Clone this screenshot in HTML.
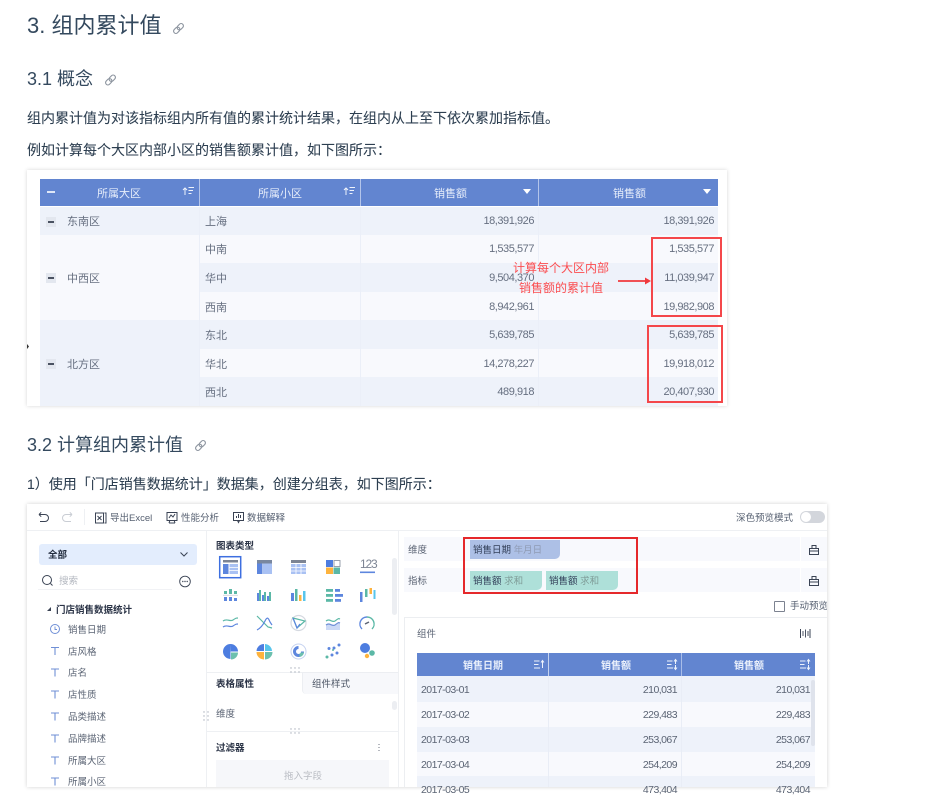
<!DOCTYPE html>
<html><head><meta charset="utf-8">
<style>
html,body{margin:0;padding:0;background:#fff}
body{position:relative;width:947px;height:787px;overflow:hidden;font-family:"Liberation Sans","Noto Sans CJK SC",sans-serif;color:#2c3e50}
.t{position:absolute;white-space:nowrap;line-height:20px;height:20px}
.r{position:absolute;box-sizing:border-box}
.h1{font-size:22px;line-height:32px;height:32px;left:27px;top:10px;color:#34495e}
.h2{font-size:18px;line-height:24px;height:24px;left:27px;color:#34495e}
.p{font-size:14px;left:27px;color:#2c3e50;-webkit-text-stroke:.07px #2c3e50}
.a{font-size:11px;color:#666f80}
.n{font-size:11px;color:#666f80;letter-spacing:-.45px}
.w{font-size:11px;color:#e6edfa}
.s{font-size:9.5px;color:#555f70}
.b{font-size:9.5px;font-weight:700;color:#2a3346}
.m{font-size:10.5px;color:#5b6474;letter-spacing:-.55px}
.f{font-size:9.5px;color:#5b6474}
.bw{font-size:10px;font-weight:700;color:#eaf0fb}
#i1,#i2{position:absolute;left:0;top:0;width:947px;height:787px;filter:blur(.25px)}
svg{position:absolute;left:0;top:0}
</style></head><body>

<div class="t h1">3. 组内累计值</div>
<div class="t h2" style="top:67px">3.1 概念</div>
<div class="t p" style="top:108px">组内累计值为对该指标组内所有值的累计统计结果，在组内从上至下依次累加指标值。</div>
<div class="t p" style="top:140px">例如计算每个大区内部小区的销售额累计值，如下图所示：</div>
<div class="t h2" style="top:433px">3.2 计算组内累计值</div>
<div class="t p" style="top:474px">1）使用「门店销售数据统计」数据集，创建分组表，如下图所示：</div>

<svg width="947" height="787">
<g fill="none" stroke="#8b939e" stroke-width="1.1">
<g transform="translate(178.5 28.5) rotate(45)"><rect x="-2.3" y="-6" width="4.6" height="7" rx="2.3"/><rect x="-2.3" y="-1" width="4.6" height="7" rx="2.3"/></g>
<g transform="translate(110.5 80) rotate(45)"><rect x="-2.3" y="-6" width="4.6" height="7" rx="2.3"/><rect x="-2.3" y="-1" width="4.6" height="7" rx="2.3"/></g>
<g transform="translate(200.5 445.5) rotate(45)"><rect x="-2.3" y="-6" width="4.6" height="7" rx="2.3"/><rect x="-2.3" y="-1" width="4.6" height="7" rx="2.3"/></g>
</g>
</svg>

<div id="i1">
<div class="r" style="left:27px;top:170px;width:700px;height:236px;background:#fff;box-shadow:0 0 4px rgba(0,0,0,.16)"></div>
<div class="r" style="left:40px;top:179px;width:678px;height:27px;background:#6285d0"></div>
<div class="r" style="left:199px;top:179px;width:1px;height:27px;background:#b4c5ea"></div>
<div class="r" style="left:360px;top:179px;width:1px;height:27px;background:#b4c5ea"></div>
<div class="r" style="left:538px;top:179px;width:1px;height:27px;background:#b4c5ea"></div>
<div class="r" style="left:40px;top:207px;width:678px;height:28px;background:#eef2fa"></div>
<div class="r" style="left:40px;top:235px;width:678px;height:28px;background:#f8f9fd"></div>
<div class="r" style="left:40px;top:263px;width:678px;height:29px;background:#eef2fa"></div>
<div class="r" style="left:40px;top:292px;width:678px;height:28px;background:#f8f9fd"></div>
<div class="r" style="left:40px;top:320px;width:678px;height:29px;background:#eef2fa"></div>
<div class="r" style="left:40px;top:349px;width:678px;height:28px;background:#f8f9fd"></div>
<div class="r" style="left:40px;top:377px;width:678px;height:29px;background:#eef2fa"></div>
<div class="r" style="left:40px;top:235px;width:160px;height:85px;background:#f8f9fd"></div>
<div class="r" style="left:40px;top:320px;width:160px;height:86px;background:#eef2fa"></div>
<div class="r" style="left:199px;top:207px;width:1px;height:199px;background:#ebeff8"></div>
<div class="r" style="left:360px;top:207px;width:1px;height:199px;background:#ebeff8"></div>
<div class="r" style="left:538px;top:207px;width:1px;height:199px;background:#ebeff8"></div>

<div class="t w" style="left:97px;top:184px">所属大区</div>
<div class="t w" style="left:258px;top:184px">所属小区</div>
<div class="t w" style="left:434px;top:184px">销售额</div>
<div class="t w" style="left:613px;top:184px">销售额</div>

<div class="r" style="left:47px;top:191px;width:8px;height:1.5px;background:#dfe7f7"></div>
<div class="r" style="left:46px;top:217px;width:10px;height:10px;background:#e3e7ef"></div>
<div class="r" style="left:48px;top:221px;width:6px;height:1.5px;background:#4a5262"></div>
<div class="r" style="left:46px;top:273px;width:10px;height:10px;background:#e3e7ef"></div>
<div class="r" style="left:48px;top:277px;width:6px;height:1.5px;background:#4a5262"></div>
<div class="r" style="left:46px;top:359px;width:10px;height:10px;background:#e3e7ef"></div>
<div class="r" style="left:48px;top:363px;width:6px;height:1.5px;background:#4a5262"></div>

<div class="t a" style="left:67px;top:212px">东南区</div>
<div class="t a" style="left:67px;top:269px">中西区</div>
<div class="t a" style="left:67px;top:355px">北方区</div>
<div class="t a" style="left:205px;top:212px">上海</div>
<div class="t a" style="left:205px;top:240px">中南</div>
<div class="t a" style="left:205px;top:269px">华中</div>
<div class="t a" style="left:205px;top:298px">西南</div>
<div class="t a" style="left:205px;top:326px">东北</div>
<div class="t a" style="left:205px;top:355px">华北</div>
<div class="t a" style="left:205px;top:383px">西北</div>

<div class="t n" style="right:413px;top:211px">18,391,926</div>
<div class="t n" style="right:413px;top:239px">1,535,577</div>
<div class="t n" style="right:413px;top:268px">9,504,370</div>
<div class="t n" style="right:413px;top:297px">8,942,961</div>
<div class="t n" style="right:413px;top:325px">5,639,785</div>
<div class="t n" style="right:413px;top:354px">14,278,227</div>
<div class="t n" style="right:413px;top:382px">489,918</div>
<div class="t n" style="right:233px;top:211px">18,391,926</div>
<div class="t n" style="right:233px;top:239px">1,535,577</div>
<div class="t n" style="right:233px;top:268px">11,039,947</div>
<div class="t n" style="right:233px;top:297px">19,982,908</div>
<div class="t n" style="right:233px;top:325px">5,639,785</div>
<div class="t n" style="right:233px;top:354px">19,918,012</div>
<div class="t n" style="right:233px;top:382px">20,407,930</div>

<div class="t" style="left:513px;top:258px;font-size:12px;color:#fb4d50">计算每个大区内部</div>
<div class="t" style="left:519px;top:278px;font-size:12px;color:#fb4d50">销售额的累计值</div>
<div class="r" style="left:651px;top:237px;width:71px;height:80px;border:2px solid #f4474a"></div>
<div class="r" style="left:647px;top:325px;width:76px;height:78px;border:2px solid #f4474a"></div>
<svg width="947" height="787">
<path d="M618 281H647" stroke="#f0383c" stroke-width="1.8"/><path d="M645 277.500l6 3.500-6 3.500z" fill="#f0383c"/>
<path d="M527 194l-4-5h8z M707 194l-4-5h8z" fill="#fff"/>
<g stroke="#eef3fc" stroke-width="1" fill="none">
<path d="M185 195v-7M183 190l2-2 2 2M188.500 187.500h5.500M188.500 190.500h4.500M188.500 193.500h3"/>
<path d="M346 195v-7M344 190l2-2 2 2M349.500 187.500h5.500M349.500 190.500h4.500M349.500 193.500h3"/>
</g>
<path d="M27 344l2 2.500-2 2.500z" fill="#333"/>
</svg>
</div>

<div id="i2">
<div class="r" style="left:27px;top:504px;width:800px;height:283px;background:#fff;box-shadow:0 0 4px rgba(0,0,0,.18)"></div>
<div class="r" style="left:27px;top:530px;width:800px;height:1px;background:#eef0f3"></div>
<div class="r" style="left:206px;top:531px;width:1px;height:256px;background:#eef0f3"></div>
<div class="r" style="left:398px;top:531px;width:1px;height:256px;background:#eef0f3"></div>
<div class="r" style="left:84px;top:509px;width:1px;height:16px;background:#eef0f3"></div>

<div class="t s" style="left:110px;top:509px">导出Excel</div>
<div class="t f" style="left:181px;top:509px;color:#555f70">性能分析</div>
<div class="t f" style="left:247px;top:509px;color:#555f70">数据解释</div>
<div class="t f" style="left:736px;top:509px;color:#555f70">深色预览模式</div>
<div class="r" style="left:800px;top:511px;width:25px;height:12px;border-radius:6px;background:#d3d6dc"></div>
<div class="r" style="left:801px;top:512px;width:10px;height:10px;border-radius:50%;background:#fff"></div>

<div class="r" style="left:39px;top:544px;width:158px;height:21px;border-radius:3px;background:#e3edfd"></div>
<div class="t b" style="left:48px;top:546px;color:#222c3e">全部</div>
<div class="t" style="left:59px;top:572px;font-size:9.5px;color:#b4b8c0">搜索</div>
<div class="r" style="left:38px;top:589px;width:134px;height:1px;background:#f1f2f5"></div>
<div class="t b" style="left:56px;top:601px">门店销售数据统计</div>
<div class="t f" style="left:68px;top:621px">销售日期</div>
<div class="t f" style="left:68px;top:643px">店风格</div>
<div class="t f" style="left:68px;top:664px">店名</div>
<div class="t f" style="left:68px;top:686px">店性质</div>
<div class="t f" style="left:68px;top:708px">品类描述</div>
<div class="t f" style="left:68px;top:730px">品牌描述</div>
<div class="t f" style="left:68px;top:752px">所属大区</div>
<div class="t f" style="left:68px;top:773px">所属小区</div>

<div class="t b" style="left:216px;top:537px">图表类型</div>
<div class="r" style="left:392px;top:558px;width:5px;height:57px;border-radius:3px;background:#eceef2"></div>
<div class="r" style="left:207px;top:672px;width:191px;height:1px;background:#eef0f3"></div>
<div class="r" style="left:302px;top:672px;width:96px;height:22px;background:#f7f8fb;border-left:1px solid #eceef2;border-top:1px solid #eceef2;border-bottom-left-radius:4px"></div>
<div class="t b" style="left:216px;top:675px">表格属性</div>
<div class="t b" style="left:312px;top:675px;font-weight:400;color:#4b5464">组件样式</div>
<div class="t f" style="left:216px;top:705px">维度</div>
<div class="r" style="left:392px;top:701px;width:5px;height:9px;border-radius:3px;background:#eceef2"></div>
<div class="r" style="left:207px;top:731px;width:191px;height:1px;background:#eef0f3"></div>
<div class="t b" style="left:216px;top:739px">过滤器</div>
<div class="r" style="left:216px;top:760px;width:173px;height:27px;background:#f6f7fa"></div>
<div class="t f" style="left:284px;top:767px;color:#b9bcc3">拖入字段</div>

<div class="r" style="left:404px;top:537px;width:396px;height:24px;background:#f8f9fd"></div>
<div class="r" style="left:801px;top:537px;width:26px;height:24px;background:#f8f9fd"></div>
<div class="r" style="left:404px;top:568px;width:396px;height:24px;background:#f8f9fd"></div>
<div class="r" style="left:801px;top:568px;width:26px;height:24px;background:#f8f9fd"></div>
<div class="t f" style="left:408px;top:541px">维度</div>
<div class="t f" style="left:408px;top:572px">指标</div>
<div class="r" style="left:470px;top:540px;width:90px;height:19px;background:#adc0e6;border-radius:0 0 5px 0"></div>
<div class="r" style="left:470px;top:571px;width:72px;height:19px;background:#aee0d9;border-radius:0 0 5px 0"></div>
<div class="r" style="left:546px;top:571px;width:72px;height:19px;background:#aee0d9;border-radius:0 0 5px 0"></div>
<div class="t f" style="left:473px;top:541px;color:#33405a">销售日期 <span style="color:#8f9bb4">年月日</span></div>
<div class="t f" style="left:473px;top:572px;color:#33405a">销售额 <span style="color:#7f9c98">求和</span></div>
<div class="t f" style="left:549px;top:572px;color:#33405a">销售额 <span style="color:#7f9c98">求和</span></div>
<div class="r" style="left:463px;top:537px;width:175px;height:57px;border:2px solid #e5282b"></div>

<div class="r" style="left:774px;top:601px;width:11px;height:11px;border:1px solid #7c8290;border-radius:1px;background:#fff"></div>
<div class="t" style="left:790px;top:597px;font-size:9.5px;color:#555f70;width:37px;overflow:hidden">手动预览</div>
<div class="r" style="left:404px;top:617px;width:423px;height:170px;background:#fff;border-top:1px solid #eceef1;border-left:1px solid #eceef1"></div>
<div class="t f" style="left:417px;top:625px">组件</div>

<div class="r" style="left:417px;top:653px;width:398px;height:23px;background:#6285d0"></div>
<div class="r" style="left:548px;top:653px;width:1px;height:23px;background:#c4d2ef"></div>
<div class="r" style="left:681px;top:653px;width:1px;height:23px;background:#a9bde8"></div>
<div class="r" style="left:417px;top:676px;width:398px;height:26px;background:#eef2fa"></div>
<div class="r" style="left:417px;top:702px;width:398px;height:25px;background:#f8f9fd"></div>
<div class="r" style="left:417px;top:727px;width:398px;height:25px;background:#eef2fa"></div>
<div class="r" style="left:417px;top:752px;width:398px;height:24px;background:#f8f9fd"></div>
<div class="r" style="left:417px;top:776px;width:398px;height:11px;background:#eef2fa"></div>
<div class="r" style="left:548px;top:676px;width:1px;height:111px;background:#e9edf6"></div>
<div class="r" style="left:681px;top:676px;width:1px;height:111px;background:#e9edf6"></div>
<div class="r" style="left:810.5px;top:680px;width:4.5px;height:66px;background:#dfe3ec;border-radius:2px"></div>

<div class="t bw" style="left:463px;top:657px">销售日期</div>
<div class="t bw" style="left:601px;top:657px">销售额</div>
<div class="t bw" style="left:734px;top:657px">销售额</div>

<div class="t m" style="left:421px;top:680px">2017-03-01</div>
<div class="t m" style="left:421px;top:705px">2017-03-02</div>
<div class="t m" style="left:421px;top:730px">2017-03-03</div>
<div class="t m" style="left:421px;top:755px">2017-03-04</div>
<div class="t m" style="left:421px;top:780px">2017-03-05</div>
<div class="t m" style="right:270px;top:680px">210,031</div>
<div class="t m" style="right:270px;top:705px">229,483</div>
<div class="t m" style="right:270px;top:730px">253,067</div>
<div class="t m" style="right:270px;top:755px">254,209</div>
<div class="t m" style="right:270px;top:780px">473,404</div>
<div class="t m" style="right:137px;top:680px">210,031</div>
<div class="t m" style="right:137px;top:705px">229,483</div>
<div class="t m" style="right:137px;top:730px">253,067</div>
<div class="t m" style="right:137px;top:755px">254,209</div>
<div class="t m" style="right:137px;top:780px">473,404</div>
<div class="t" style="left:360px;top:554px;font-size:12px;letter-spacing:-1.2px;color:#7d8594">123</div>

<svg width="947" height="787">
<!-- toolbar -->
<g fill="none" stroke="#3a4354" stroke-width="1">
<path d="M39 514.500h6a3.500 3.500 0 0 1 0 7h-5M39 514.500l2.200-2.200M39 514.500l2.200 2.200"/>
<path d="M72 514.500h-6a3.500 3.500 0 0 0 0 7h5M72 514.500l-2.200-2.200M72 514.500l-2.200 2.200" stroke="#c9cdd4"/>
<rect x="95.500" y="513" width="8" height="10"/><path d="M104.500 513h1.500v10h-1.500M97.500 516l4 4M101.500 516l-4 4"/>
<rect x="167" y="512.500" width="10" height="8"/><path d="M169 518l2-3 2 2 2-3M169 523h6M170 520l-1 3M174 520l1 3"/>
<rect x="233.500" y="512.500" width="10" height="8"/><path d="M236.500 518v-2M238.500 518v-4M240.500 518v-3M237.500 520.500l1 2 1-2"/>
</g>
<path d="M180.500 552.500l3.500 3.500 3.500-3.500" fill="none" stroke="#3a4354" stroke-width="1"/>
<!-- search -->
<circle cx="47" cy="580" r="4.500" fill="none" stroke="#3a4354" stroke-width="1"/><path d="M50.500 583.500l2 2" stroke="#3a4354" stroke-width="1"/>
<circle cx="185" cy="581.500" r="5.300" fill="none" stroke="#3a4354" stroke-width=".9"/>
<g fill="#3a4354"><circle cx="182.800" cy="581.500" r=".7"/><circle cx="185" cy="581.500" r=".7"/><circle cx="187.200" cy="581.500" r=".7"/></g>
<path d="M47 611l4-4v4z" fill="#3a4354"/>
<!-- fields -->
<circle cx="55" cy="629" r="4.500" fill="none" stroke="#6f8fd6" stroke-width="1"/><path d="M55 626.500v3h2" fill="none" stroke="#6f8fd6" stroke-width=".9"/>
<g stroke="#6f8fd6" stroke-width="1.100" fill="none">
<path d="M51 647.500h8M55 647.500v7.500"/><path d="M51 669h8M55 669v7.500"/><path d="M51 691h8M55 691v7.500"/><path d="M51 713h8M55 713v7.500"/><path d="M51 735h8M55 735v7.500"/><path d="M51 757h8M55 757v7.500"/><path d="M51 778h8M55 778v7.500"/>
</g>
<g fill="#a9afba">
<circle cx="204" cy="712" r=".7"/><circle cx="208" cy="712" r=".7"/><circle cx="204" cy="716" r=".7"/><circle cx="208" cy="716" r=".7"/><circle cx="204" cy="720" r=".7"/><circle cx="208" cy="720" r=".7"/>
<circle cx="291" cy="668" r=".7"/><circle cx="295" cy="668" r=".7"/><circle cx="299" cy="668" r=".7"/><circle cx="291" cy="672" r=".7"/><circle cx="295" cy="672" r=".7"/><circle cx="299" cy="672" r=".7"/>
<circle cx="291" cy="729" r=".7"/><circle cx="295" cy="729" r=".7"/><circle cx="299" cy="729" r=".7"/><circle cx="291" cy="733" r=".7"/><circle cx="295" cy="733" r=".7"/><circle cx="299" cy="733" r=".7"/>
</g>
<path d="M379 744v.8M379 747v.8M379 750v.8" stroke="#3a4354" stroke-width="1"/>
<!-- chart icons row 1 -->
<rect x="219.700" y="556.700" width="21" height="21" fill="#fff" stroke="#3d6fe0" stroke-width="1.500"/>
<rect x="223" y="560" width="15" height="2.500" fill="#7c8494"/>
<rect x="223" y="564" width="5.500" height="10" fill="#5d86de"/><rect x="229.500" y="564" width="8.500" height="10" fill="#a9c1f3"/>
<path d="M229.500 567.500h8.500M229.500 570.500h8.500" stroke="#fff" stroke-width=".7"/>
<rect x="257" y="560" width="15" height="3.500" fill="#79879f"/><rect x="257" y="563.500" width="5.500" height="10.500" fill="#5d86de"/><rect x="263" y="563.500" width="9" height="10.500" fill="#a9c1f3"/>
<rect x="291" y="560" width="15" height="3" fill="#7c8494"/><rect x="291" y="564" width="15" height="10" fill="#a9c1f3"/><path d="M296 564v10M301 564v10M291 567.500h15M291 571h15" stroke="#fff" stroke-width=".8"/>
<rect x="326" y="560" width="7" height="7" fill="#4d7de0"/><rect x="334" y="560.500" width="6" height="6" fill="none" stroke="#9aa1ad"/><rect x="326" y="567.500" width="7" height="6.500" fill="#fdb33e"/><rect x="333.500" y="567.500" width="6.500" height="6.500" fill="#5bb8a6"/>
<rect x="360" y="571.500" width="15" height="1.600" fill="#5d86de"/>
<!-- row 2 -->
<g fill="#5d86de"><rect x="224" y="597" width="3" height="4"/><rect x="229" y="597" width="3" height="4"/><rect x="234" y="598" width="3" height="3"/></g>
<g fill="#5bb8a6"><rect x="224" y="591" width="3" height="3"/><rect x="229" y="589" width="3" height="5"/><rect x="234" y="591" width="3" height="3"/></g>
<rect x="223" y="594.800" width="15" height="1" fill="#d5d9e0"/>
<g fill="#5d86de"><rect x="257" y="593" width="2" height="8"/><rect x="262" y="595" width="2" height="6"/><rect x="267" y="596" width="2" height="5"/></g>
<g fill="#5bb8a6"><rect x="259" y="590" width="2" height="11"/><rect x="264" y="592" width="2" height="9"/><rect x="269" y="592" width="2" height="9"/></g>
<rect x="291" y="593" width="3" height="8" fill="#5d86de"/><rect x="295" y="589" width="2.500" height="12" fill="#5bb8a6"/><rect x="299" y="595" width="2.500" height="6" fill="#fdb33e"/><rect x="303" y="591" width="2.500" height="10" fill="#57c5ec"/>
<g fill="#5bb8a6"><rect x="326" y="589" width="7" height="2.800"/><rect x="326" y="594" width="7" height="2.800"/><rect x="326" y="599" width="7" height="2.800"/></g>
<g fill="#5d86de"><rect x="335" y="589" width="5" height="2.800"/><rect x="335" y="594" width="8" height="2.800"/><rect x="335" y="599" width="6" height="2.800"/></g>
<rect x="360" y="592" width="2.500" height="10" fill="#5d86de"/><rect x="365" y="589" width="2.500" height="8" fill="#5bb8a6"/><rect x="369.500" y="588" width="2.500" height="6" fill="#fdb33e"/><rect x="373.500" y="590" width="2" height="9" fill="#57c5ec"/>
<!-- row 3 -->
<g fill="none" stroke-width="1.200">
<path d="M223 621c4-3 7 1 10-1s3-2 5-2" stroke="#5bb8a6"/><path d="M223 627c4-3 7 1 10-1s3-2 5-2" stroke="#5d86de"/>
<path d="M257 616l6 6 5 5 4 1" stroke="#5bb8a6"/><path d="M257 630c4-2 6-5 8-9s3-4 5 1l2 3" stroke="#5d86de"/>
<circle cx="298.500" cy="623" r="7.500" stroke="#d5d9e0"/><path d="M293 618l12 3-8 7z" stroke="#5bb8a6"/><path d="M293 618l4 10 3-4" stroke="#5d86de"/>
<path d="M326 621c4-3 6 2 9 0s3-3 5-2" stroke="#5bb8a6"/>
<path d="M326 625c4-3 6 2 9 0s3-3 5-2v7h-14z" fill="#ccd9f6" stroke="none"/><path d="M326 625c4-3 6 2 9 0s3-3 5-2" stroke="#6f8fd6"/>
<path d="M362 629a7 7 0 0 1 5-12" stroke="#5d86de" stroke-width="1.400"/><path d="M367 617a7 7 0 0 1 5 12" stroke="#5bb8a6" stroke-width="1.400"/><path d="M365 624l4-2" stroke="#5b6474" stroke-width="1.500"/>
</g>
<!-- row 4 -->
<path d="M230.500 651.500v-7.500a7.500 7.500 0 0 1 7.500 7.500z" fill="#4d7de0"/><path d="M230.500 644a7.500 7.500 0 1 0 0 15v-7.500h-.2z" fill="#4d7de0"/><path d="M231 652.500h7a7 7 0 0 1-7 7z" fill="#6cc0ae"/>
<path d="M264 651v-7a7.500 7.500 0 0 0-7.500 7z" fill="#4d7de0"/><path d="M265 644a7.500 7.500 0 0 1 7 7h-7z" fill="#57c5ec"/><path d="M265 652h7.500a7.500 7.500 0 0 1-7.500 7.500z" fill="#6cc0ae"/><path d="M264 652v7.500a7.500 7.500 0 0 1-7.500-7.500z" fill="#fdb33e"/>
<circle cx="298.500" cy="651.500" r="7.500" fill="none" stroke="#c5d2f0" stroke-width="1"/><path d="M298.500 646a5.500 5.500 0 1 0 5.500 5.500h-5.500z" fill="#5d86de"/><path d="M299.500 652.500h4.500a5 5 0 0 1-4.500 4.500z" fill="#6cc0ae"/><circle cx="298.500" cy="651.500" r="2.500" fill="#fff"/>
<g fill="#5d86de"><circle cx="339" cy="645" r="1.500"/><circle cx="334" cy="648" r="1.500"/><circle cx="329" cy="648.500" r="1.500"/><circle cx="337" cy="653" r="1.500"/><circle cx="332" cy="655" r="1.500"/></g>
<g fill="#5bb8a6"><circle cx="327" cy="657" r="1.500"/><circle cx="333" cy="650" r="1"/></g>
<circle cx="365" cy="648" r="5" fill="#4d7de0"/><circle cx="372" cy="653" r="2.800" fill="#5bb8a6"/><circle cx="367" cy="656" r="2.200" fill="#fdb33e"/>
<!-- right -->
<g fill="none" stroke="#3a4354" stroke-width="1">
<path d="M809.500 548.500h9v6h-9zM812 548.500v-3h4v3M809.500 551h9"/>
<path d="M809.500 579.500h9v6h-9zM812 579.500v-3h4v3M809.500 582h9"/>
<path d="M800.500 629v9M810 629v9"/><path d="M803 631v5M805.500 629.500v8M808 631v5" stroke-width=".9"/>
</g>
<g stroke="#eef3fc" stroke-width="1" fill="none">
<path d="M534 661h5.500M534 664.500h4.500M534 668h6M542.500 668v-7M541 662.500l1.500-2 1.500 2"/>
<path d="M667 661h5.500M667 664.500h4.500M667 668h6M675.500 664v-4M674 661.500l1.500-2 1.500 2M675.500 665v4M674 667.500l1.500 2 1.500-2"/>
<path d="M800 661h5.500M800 664.500h4.500M800 668h6M808.500 664v-4M807 661.500l1.500-2 1.500 2M808.500 665v4M807 667.500l1.500 2 1.500-2"/>
</g>
</svg>
</div>
</body></html>
